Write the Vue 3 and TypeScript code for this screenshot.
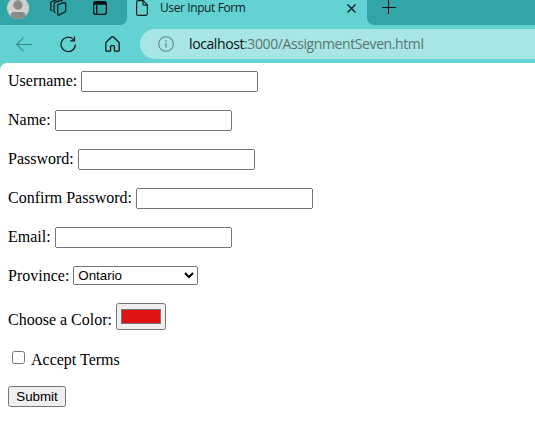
<script setup lang="ts">
import { ref } from 'vue'

interface TextField {
  id: string
  label: string
  type: string
}

const fields: TextField[] = [
  { id: 'username', label: 'Username:', type: 'text' },
  { id: 'name', label: 'Name:', type: 'text' },
  { id: 'password', label: 'Password:', type: 'password' },
  { id: 'confirm', label: 'Confirm Password:', type: 'password' },
  { id: 'email', label: 'Email:', type: 'email' },
]

const province = ref('Ontario')
const color = ref('#e01414')
const accepted = ref(false)
</script>

<template>
  <div class="browser">
    <header class="chrome">
      <div class="tabs">
        <div class="tools">
          <svg class="avatar" width="22" height="25" viewBox="0 0 22 25">
            <defs>
              <clipPath id="face"><circle cx="11" cy="8" r="11" /></clipPath>
            </defs>
            <g clip-path="url(#face)">
              <rect y="-4" width="22" height="24" fill="#d2d0ce" />
              <circle cx="11" cy="5" r="4.7" fill="#8d8b89" />
              <path d="M3.5 20v-4.5q0-3.5 3.5-3.5h8q3.5 0 3.5 3.5V20z" fill="#8d8b89" />
            </g>
          </svg>
          <svg class="spaces" width="18" height="18" viewBox="0 0 18 18" fill="none" stroke="#0a1414" stroke-width="1.2" stroke-linejoin="round" stroke-linecap="round">
            <path d="M8.2 5.4l6.1-1.8q1.4-.3 1.4 1.1v6.7q0 1.2-1.1 1.6l-5.3 2.9q-1.6.6-1.6-1V6.5q0-.8.5-1.1z" />
            <path d="M12.2 2.2q-.3-.9-1.1-.7L5.2 3.4q-1.1.4-1.1 1.5v7.3q0 1.1 1.1 1.1" />
            <path d="M8.4 1Q8 .3 7.3.6L1.9 2.5Q.8 3 .8 4.1v6.3q0 1 1 1" />
          </svg>
          <svg class="panel" width="14" height="14" viewBox="0 0 14 14" fill="none" stroke="#061010" stroke-width="1.3">
            <rect x=".65" y=".65" width="12.7" height="12.7" rx="2" />
            <path d="M1 2.3h12" stroke-width="2.8" />
            <path d="M3.7 4v9" />
          </svg>
        </div>
        <div class="tab">
          <svg width="12" height="16" viewBox="0 0 12 16" fill="none" stroke="#102020" stroke-width="1.2" stroke-linejoin="round">
            <path d="M2.1.6h5.1l4.2 4.3v8.9q0 1.5-1.5 1.5H2.1Q.6 15.3.6 13.8V2.1Q.6.6 2.1.6z" />
            <path d="M7 .8v3.1q0 1.2 1.2 1.2h3" />
          </svg>
          <span class="title">User Input Form</span>
          <svg class="close" width="9" height="9" viewBox="0 0 9 9" stroke="#0a1818" stroke-width="1.15">
            <path d="M.5.5l8 8M8.5.5l-8 8" />
          </svg>
        </div>
        <div class="rest">
          <svg width="14" height="14" viewBox="0 0 14 14" stroke="#061010" stroke-width="1">
            <path d="M0 7.5h14M6.5 0v14" />
          </svg>
        </div>
      </div>
      <nav class="toolbar">
        <svg class="back" width="17" height="15" viewBox="0 0 17 15" fill="none" stroke="#398684" stroke-width="1.1">
          <path d="M16 7.5H1M7.5.7L.7 7.5l6.8 6.8" />
        </svg>
        <svg class="reload" width="17" height="17" viewBox="0 0 17 17" fill="none" stroke="#0a1818" stroke-width="1.2">
          <path d="M15.4 8.5A7.2 7.2 0 1 1 13.8 3.9" />
          <path d="M14.5.5v4.3h-4.3" />
        </svg>
        <svg class="home" width="15" height="16" viewBox="0 0 15 16" fill="none" stroke="#0a1818" stroke-width="1.3" stroke-linejoin="round">
          <path d="M.8 7q0-.6.5-1L6.7 1q.8-.7 1.6 0l5.4 5q.5.4.5 1v7.3q0 .9-.9.9H10q-.6 0-.6-.6v-4q0-.9-.9-.9h-2q-.9 0-.9.9v4q0 .6-.6.6H1.7q-.9 0-.9-.9z" />
        </svg>
        <div class="address">
          <svg width="16" height="16" viewBox="0 0 16 16" fill="none" stroke="#638785" stroke-width="1.1">
            <circle cx="8" cy="8" r="7.3" />
            <path d="M8 6.8v4.9M8 4.1v1.4" stroke-width="1.2" />
          </svg>
          <span class="url"><span class="host">localhost</span>:3000/AssignmentSeven.html</span>
        </div>
      </nav>
    </header>
    <main class="page">
      <form @submit.prevent>
        <div v-for="field in fields" :key="field.id" class="row field">
          <label :for="field.id">{{ field.label }}</label>
          <input :id="field.id" class="text" :type="field.type" />
        </div>
        <div class="row province">
          <label for="province">Province:</label>
          <select id="province" v-model="province">
            <option>Ontario</option>
          </select>
        </div>
        <div class="row color">
          <label for="color">Choose a Color:</label>
          <input id="color" v-model="color" type="color" />
        </div>
        <div class="row terms">
          <input id="terms" v-model="accepted" type="checkbox" />
          <label for="terms">Accept Terms</label>
        </div>
        <button type="submit">Submit</button>
      </form>
    </main>
  </div>
</template>

<style>
body {
  margin: 0;
  overflow: hidden;
}
</style>

<style scoped>
.browser {
  width: 535px;
  height: 439px;
  background: #62d2d2;
  overflow: hidden;
}
svg {
  display: block;
  flex: none;
}
.tabs {
  display: flex;
  height: 25px;
}
.tools {
  display: flex;
  width: 127px;
  background: #31a5a8;
  border-bottom-right-radius: 7px;
}
.avatar {
  margin-left: 7px;
}
.spaces {
  margin-left: 21px;
  margin-top: -1px;
}
.panel {
  margin-left: 25px;
  margin-top: 1px;
}
.tab {
  display: flex;
  box-sizing: border-box;
  width: 240px;
  padding-left: 9px;
}
.title {
  width: 187px;
  margin-left: 12px;
  font: 12px/16px "Open Sans", "Noto Sans", sans-serif;
  letter-spacing: -0.4px;
  color: #102424;
  white-space: nowrap;
}
.close {
  margin-top: 4px;
}
.rest {
  flex: 1;
  padding-left: 15px;
  background: #31a5a8;
  border-bottom-left-radius: 7px;
}
.toolbar {
  display: flex;
  align-items: center;
  height: 38px;
}
.back {
  margin-left: 16px;
}
.reload {
  margin-left: 27px;
}
.home {
  margin-left: 28px;
}
.address {
  display: flex;
  align-items: center;
  flex: 1;
  height: 30px;
  margin-left: 20px;
  padding-left: 18px;
  background: #a7e6e4;
  border-radius: 15px 0 0 15px;
}
.url {
  margin-left: 15px;
  font: 14px/20px "Open Sans", "Noto Sans", sans-serif;
  letter-spacing: -0.4px;
  color: #5c7573;
  white-space: nowrap;
}
.host {
  color: #061414;
}
.page {
  box-sizing: border-box;
  height: 376px;
  padding: 8px;
  background: #fff;
  border-top-left-radius: 7px;
  font: 16px/18px "Liberation Serif", serif;
  color: #000;
}
form {
  display: flex;
  flex-direction: column;
  align-items: flex-start;
  gap: 18px;
}
.row {
  display: flex;
  align-items: center;
  gap: 4px;
  height: 21px;
  white-space: nowrap;
}
.field label {
  padding-bottom: 2px;
}
input,
select,
button {
  box-sizing: border-box;
  margin: 0;
  font: 13.333px "Liberation Sans", Arial, sans-serif;
}
.text {
  width: 177px;
  height: 21px;
}
.province {
  height: 19px;
}
select {
  width: 125px;
  height: 19px;
}
.color {
  height: 27px;
}
.color label {
  padding-top: 6px;
}
#color {
  width: 50px;
  height: 27px;
}
.terms {
  height: 20px;
  gap: 6px;
}
#terms {
  width: 13px;
  height: 13px;
  margin: 0 0 1px 4px;
}
.terms label {
  padding-top: 3px;
}
button {
  width: 58px;
  height: 21px;
  padding: 1px 6px;
}
</style>
